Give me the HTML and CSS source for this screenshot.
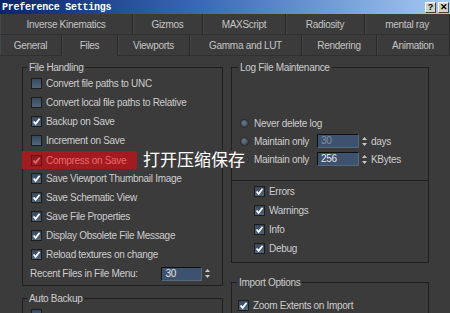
FILE: index.html
```html
<!DOCTYPE html>
<html lang="en">
<head>
    <meta charset="UTF-8">
    <meta name="viewport" content="width=device-width, initial-scale=1.0">
    <title>Preference Settings</title>
    <link rel="stylesheet" href="styles.css">
</head>
<body>

<div id="window">
    <div id="titlebar">
        <span class="title">Preference Settings</span>
        <div class="caption-buttons">
            <span class="cap-btn">?</span>
            <span class="cap-btn">&#x2715;</span>
        </div>
    </div>

    <div id="tabs">
        <div class="tab-row row1">
            <div class="tab">Inverse Kinematics</div>
            <div class="tab">Gizmos</div>
            <div class="tab">MAXScript</div>
            <div class="tab">Radiosity</div>
            <div class="tab">mental ray</div>
        </div>
        <div class="tab-row row2">
            <div class="tab">General</div>
            <div class="tab active">Files</div>
            <div class="tab">Viewports</div>
            <div class="tab">Gamma and LUT</div>
            <div class="tab">Rendering</div>
            <div class="tab">Animation</div>
        </div>
    </div>

    <div id="panel">
        <div class="col col-left">
            <fieldset class="group file-handling">
                <legend>File Handling</legend>
                <div class="check-row"><span class="checkbox"></span>Convert file paths to UNC</div>
                <div class="check-row"><span class="checkbox"></span>Convert local file paths to Relative</div>
                <div class="check-row"><span class="checkbox checked"></span>Backup on Save</div>
                <div class="check-row"><span class="checkbox"></span>Increment on Save</div>
                <div class="check-row highlight"><span class="checkbox checked"></span>Compress on Save</div>
                <div class="check-row"><span class="checkbox checked"></span>Save Viewport Thumbnail Image</div>
                <div class="check-row"><span class="checkbox checked"></span>Save Schematic View</div>
                <div class="check-row"><span class="checkbox checked"></span>Save File Properties</div>
                <div class="check-row"><span class="checkbox checked"></span>Display Obsolete File Message</div>
                <div class="check-row"><span class="checkbox checked"></span>Reload textures on change</div>
                <div class="spin-row recent">
                    <span class="spin-label">Recent Files in File Menu:</span>
                    <span class="spin-field">30</span>
                    <span class="spin-arrows"></span>
                </div>
            </fieldset>
            <fieldset class="group auto-backup">
                <legend>Auto Backup</legend>
                <div class="check-row"><span class="checkbox"></span></div>
            </fieldset>
        </div>

        <div class="col col-right">
            <fieldset class="group log-file">
                <legend>Log File Maintenance</legend>
                <div class="radio-row"><span class="radio"></span>Never delete log</div>
                <div class="radio-row">
                    <span class="radio"></span>
                    <span class="spin-label">Maintain only</span>
                    <span class="spin-field disabled">30</span>
                    <span class="spin-arrows"></span>
                    <span>days</span>
                </div>
                <div class="radio-row">
                    <span class="radio"></span>
                    <span class="spin-label">Maintain only</span>
                    <span class="spin-field">256</span>
                    <span class="spin-arrows"></span>
                    <span>KBytes</span>
                </div>
                <div class="separator"></div>
                <div class="log-checks">
                    <div class="check-row"><span class="checkbox checked"></span>Errors</div>
                    <div class="check-row"><span class="checkbox checked"></span>Warnings</div>
                    <div class="check-row"><span class="checkbox checked"></span>Info</div>
                    <div class="check-row"><span class="checkbox checked"></span>Debug</div>
                </div>
            </fieldset>
            <fieldset class="group import-options">
                <legend>Import Options</legend>
                <div class="check-row"><span class="checkbox checked"></span>Zoom Extents on Import</div>
            </fieldset>
        </div>
    </div>

    <span class="note">打开压缩保存</span>
</div>

<script>
    // Fill checked boxes with the check mark and spinners with their arrows
    const checkSvg = '<svg width="9" height="9" viewBox="0 0 9 9"><path d="M1.5 4.5 L3.6 6.8 L7.6 1.8" fill="none" stroke="currentColor" stroke-width="1.8"/></svg>';
    const arrowSvg = '<svg width="7" height="13" viewBox="0 0 7 13"><path d="M3.5 2 L6 5 L1 5 Z M1 8 L6 8 L3.5 11 Z" fill="#c8c8c8"/></svg>';

    document.querySelectorAll('.checkbox.checked').forEach(box => {
        box.innerHTML = checkSvg;
    });
    document.querySelectorAll('.spin-arrows').forEach(item => {
        item.innerHTML = arrowSvg;
    });
</script>

</body>
</html>
```

FILE: styles.css
```css
body {
    margin: 0;
    width: 450px;
    height: 313px;
    overflow: hidden;
    background-color: #3b3b3b;
    font-family: "Liberation Sans", Arial, sans-serif;
    font-size: 10px;
    letter-spacing: -0.3px;
    color: #cdcdcd;
}
#window {
    position: relative;
    height: 313px;
    display: flex;
    flex-direction: column;
    overflow: hidden;
}
#titlebar {
    height: 14px;
    flex: none;
    display: flex;
    align-items: center;
    justify-content: space-between;
    padding-left: 2px;
    background: linear-gradient(to right, #0a246a, #3a6ab8 45%, #a6caf0);
}
.title {
    font-family: "Liberation Mono", monospace;
    font-weight: bold;
    font-size: 10px;
    letter-spacing: -0.25px;
    color: #fff;
}
.caption-buttons {
    display: flex;
    gap: 2px;
    padding-right: 1px;
}
.cap-btn {
    width: 11px;
    height: 11px;
    box-sizing: border-box;
    display: flex;
    align-items: center;
    justify-content: center;
    background-color: #d4d0c8;
    border: 1px solid;
    border-color: #fff #404040 #404040 #fff;
    font-family: "Liberation Sans", Arial, sans-serif;
    font-weight: bold;
    font-size: 9px;
    letter-spacing: 0;
    color: #000;
}
.tab-row {
    display: grid;
    height: 21px;
}
.row1 {
    grid-template-columns: 133px 70px 83px 79px 85px;
}
.row2 {
    grid-template-columns: 62px 56px 72px 112px 75px 73px;
}
.tab {
    display: flex;
    align-items: center;
    justify-content: center;
    border-right: 1px solid #282828;
    border-bottom: 1px solid #303030;
    box-shadow: inset 1px 0 0 #464646;
    color: #c4c4c4;
}
.tab.active {
    border-bottom-color: transparent;
}
#panel {
    flex: 1;
    display: flex;
    gap: 8px;
    padding-left: 22px;
}
.col {
    display: flex;
    flex-direction: column;
}
.col-left {
    width: 201px;
}
.col-right {
    width: 198px;
}
.group {
    margin: 0;
    min-width: 0;
    padding: 0 8px;
    border: 1px solid #1f1f1f;
}
.group legend {
    padding: 0 2px;
    line-height: 13px;
    color: #cdcdcd;
}
.file-handling {
    margin-top: 5px;
    padding-bottom: 2px;
}
.file-handling legend,
.auto-backup legend {
    margin-left: -4px;
}
.auto-backup {
    flex: 1;
    margin-top: 6px;
    border-bottom: none;
}
.log-file {
    margin-top: 5px;
    padding-top: 40px;
    padding-bottom: 4px;
}
.log-file legend {
    margin-left: -2px;
}
.import-options {
    flex: 1;
    margin-top: 13px;
    padding-top: 7px;
    padding-left: 6px;
    border-bottom: none;
}
.import-options legend {
    margin-left: -1px;
}
.check-row {
    display: flex;
    align-items: center;
    gap: 4px;
    height: 19px;
    white-space: nowrap;
}
.check-row.highlight {
    margin-left: -9px;
    padding-left: 9px;
    width: 106px;
    height: 18px;
    margin-top: 1px;
    background-color: #a11b20;
    color: #e86a6a;
}
.checkbox {
    width: 11px;
    height: 11px;
    box-sizing: border-box;
    flex: none;
    display: flex;
    align-items: center;
    justify-content: center;
    border: 1px solid #1c1c1c;
    background: linear-gradient(#36485c, #52667c);
    color: #fff;
}
.highlight .checkbox {
    border-color: #701015;
    background: linear-gradient(#8a1a20, #9c2228);
    color: #e86a6a;
}
.radio-row {
    display: flex;
    align-items: center;
    height: 18px;
    white-space: nowrap;
}
.radio {
    width: 9px;
    height: 9px;
    box-sizing: border-box;
    flex: none;
    margin-right: 5px;
    border-radius: 50%;
    border: 1px solid #2a2a2a;
    background: radial-gradient(circle at 40% 40%, #6c7c8c, #2c3a48);
}
.spin-label {
    width: 63px;
}
.spin-row {
    display: flex;
    align-items: center;
    height: 19px;
    white-space: nowrap;
}
.recent .spin-label {
    margin-left: -1px;
    width: 133px;
}
.spin-field {
    width: 42px;
    height: 14px;
    box-sizing: border-box;
    padding-left: 3px;
    line-height: 12px;
    border: 1px solid;
    border-color: #101010 #56687c #56687c #101010;
    background-color: #3d526e;
    color: #e6e6e6;
}
.recent .spin-field {
    width: 41px;
}
.spin-field.disabled {
    color: #7f90a4;
}
.spin-arrows {
    display: flex;
    margin: 0 3px 0 2px;
}
.separator {
    margin: 12px -8px 0;
    border-top: 1px solid #1f1f1f;
}
.log-checks {
    padding-top: 1px;
    padding-left: 14px;
}
.note {
    position: absolute;
    left: 141px;
    top: 150px;
    padding: 0 2px;
    line-height: 18px;
    font-family: "Noto Sans CJK SC", sans-serif;
    font-size: 17px;
    letter-spacing: 0;
    color: #fff;
    background-color: #3b3b3b;
}
```
